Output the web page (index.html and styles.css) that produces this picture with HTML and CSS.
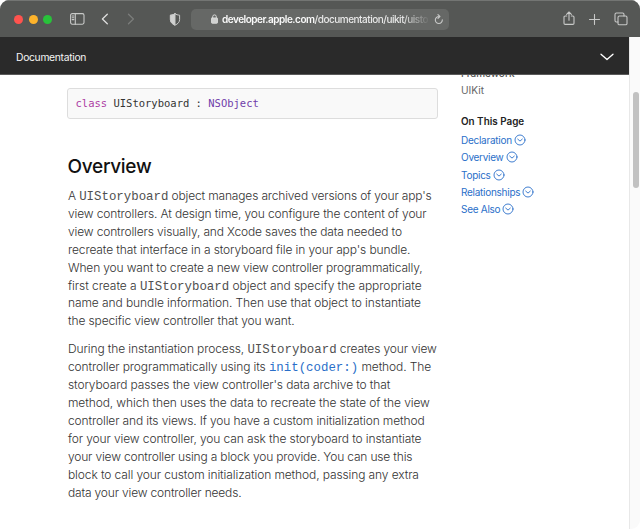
FILE: index.html
```html
<!DOCTYPE html>
<html lang="en">
<head>
<meta charset="utf-8">
<title>UIStoryboard</title>
<link rel="stylesheet" href="styles.css">
</head>
<body>
<div class="window">
  <header class="toolbar">
    <div class="lights"><i class="red"></i><i class="amber"></i><i class="green"></i></div>
    <svg class="sidebar-icon" width="15" height="12" viewBox="0 0 15 12"><rect x=".6" y=".6" width="13.4" height="10.6" rx="1.6"/><path d="M5.3.6v10.6M2.2 3h1.6M2.2 4.8h1.6M2.2 6.6h1.6"/></svg>
    <svg class="back" width="8" height="12" viewBox="0 0 8 12"><path d="M6.3 1.2 1.4 6l4.9 4.8"/></svg>
    <svg class="forward" width="8" height="12" viewBox="0 0 8 12"><path d="M1.5 1.2 6.4 6l-4.9 4.8"/></svg>
    <svg class="shield" width="12" height="13" viewBox="0 0 12 13"><path d="M6 .7c1.3 1 2.8 1.3 4.6 1.5v4.3c0 2.600-1.600 4.300-4.600 5.700C3 10.800 1.400 9.100 1.400 6.500V2.200C3.200 2 4.700 1.700 6 .7Z"/><path class="solid" d="M6 .7v11.500C3 10.800 1.400 9.100 1.400 6.500V2.200C3.200 2 4.700 1.700 6 .7Z"/></svg>
    <div class="address">
      <svg class="lock" width="7" height="10" viewBox="0 0 7 10"><rect class="solid" x=".4" y="4" width="6.200" height="5.200" rx=".8"/><path d="M1.700 4.400V2.700a1.800 1.800 0 0 1 3.600 0v1.700"/></svg>
      <span class="url"><b>developer.apple.com</b>/documentation/uikit/uisto</span>
      <svg class="reload" width="10" height="11" viewBox="0 0 10 11"><path d="M8.300 5.800A3.500 3.500 0 1 1 4.800 2.500h.8M4 .7l1.900 1.800L4 4.300"/></svg>
    </div>
    <svg class="share" width="12" height="15" viewBox="0 0 12 15"><path d="M3.700 5H2.200Q1 5 1 6.200v6Q1 13.400 2.200 13.400h7.600q1.200 0 1.200-1.200v-6Q11 5 9.800 5H8.300M6 9.200V1.200M3.600 3.400 6 1l2.400 2.400"/></svg>
    <svg class="plus" width="11" height="11" viewBox="0 0 11 11"><path d="M5.500.5v10M.5 5.500h10"/></svg>
    <svg class="tabs" width="14" height="14" viewBox="0 0 14 14"><rect x="4" y="4" width="9" height="8.800" rx="1.400"/><path d="M4 10H2.400Q1 10 1 8.600V2.400Q1 1 2.400 1h6.200Q10 1 10 2.400V4"/></svg>
  </header>
  <div class="viewport">
    <div class="page">
      <nav class="docbar"><span>Documentation</span><svg width="14" height="8" viewBox="0 0 14 8"><path d="M1 1.200 7 6.500l6-5.300"/></svg></nav>
      <div class="columns">
        <main>
          <pre class="declaration"><b class="kw">class</b> UIStoryboard : <b class="type">NSObject</b></pre>
          <h1>Overview</h1>
          <p><span class="l l1">A <code>UIStoryboard</code> object manages archived versions of your app's</span>
          <span class="l l2">view controllers. At design time, you configure the content of your</span>
          <span class="l l3">view controllers visually, and Xcode saves the data needed to</span>
          <span class="l l4">recreate that interface in a storyboard file in your app's bundle.</span>
          <span class="l l5">When you want to create a new view controller programmatically,</span>
          <span class="l l6">first create a <code>UIStoryboard</code> object and specify the appropriate</span>
          <span class="l l7">name and bundle information. Then use that object to instantiate</span>
          <span class="l l8">the specific view controller that you want.</span></p>
          <p><span class="l m1">During the instantiation process, <code>UIStoryboard</code> creates your view</span>
          <span class="l m2">controller programmatically using its <code class="link">init(coder:)</code> method. The</span>
          <span class="l m3">storyboard passes the view controller's data archive to that</span>
          <span class="l m4">method, which then uses the data to recreate the state of the view</span>
          <span class="l m5">controller and its views. If you have a custom initialization method</span>
          <span class="l m6">for your view controller, you can ask the storyboard to instantiate</span>
          <span class="l m7">your view controller using a block you provide. You can use this</span>
          <span class="l m8">block to call your custom initialization method, passing any extra</span>
          <span class="l m9">data your view controller needs.</span></p>
        </main>
        <aside>
          <div class="clip"><strong>Framework</strong></div>
          <div class="framework">UIKit</div>
          <h2>On This Page</h2>
          <ul>
            <li>Declaration<svg viewBox="0 0 12 12"><circle cx="6" cy="6" r="5"/><path d="m3.700 5.100 2.300 2 2.300-2"/></svg></li>
            <li>Overview<svg viewBox="0 0 12 12"><circle cx="6" cy="6" r="5"/><path d="m3.700 5.100 2.300 2 2.300-2"/></svg></li>
            <li>Topics<svg viewBox="0 0 12 12"><circle cx="6" cy="6" r="5"/><path d="m3.700 5.100 2.300 2 2.300-2"/></svg></li>
            <li>Relationships<svg viewBox="0 0 12 12"><circle cx="6" cy="6" r="5"/><path d="m3.700 5.100 2.300 2 2.300-2"/></svg></li>
            <li>See Also<svg viewBox="0 0 12 12"><circle cx="6" cy="6" r="5"/><path d="m3.700 5.100 2.300 2 2.300-2"/></svg></li>
          </ul>
        </aside>
      </div>
    </div>
    <div class="scrollbar"><div class="thumb"></div></div>
  </div>
</div>
</body>
</html>
```
FILE: styles.css
```css
* { box-sizing: border-box; }
body { margin: 0; background: #fff; font-family: Inter, "Liberation Sans", sans-serif; }
svg { display: block; flex: none; fill: none; stroke: #c8c9c8; stroke-width: 1.1; stroke-linecap: round; stroke-linejoin: round; }
.solid { fill: #d0d1d0; }
.window { width: 640px; height: 529px; border-radius: 9px; overflow: hidden; display: flex; flex-direction: column; }
.toolbar { height: 37px; flex: none; display: flex; align-items: center; padding-left: 14px; background: #555755; border-top: 1px solid #737573; }
.lights { display: flex; gap: 5.500px; }
.lights i { width: 9px; height: 9px; border-radius: 50%; }
.red { background: #ff534e; }
.amber { background: #fdb32b; }
.green { background: #28c23a; }
.sidebar-icon { margin-left: 17.500px; }
.back { margin-left: 16.500px; stroke: #dededd; stroke-width: 1.300; }
.forward { margin-left: 17.500px; stroke: #7b7d7b; stroke-width: 1.300; }
.shield { margin-left: 34.500px; stroke-width: 1; }
.address { margin-left: 10px; width: 258px; height: 21px; border-radius: 5px; background: #666866; display: flex; align-items: center; padding: 0 4px 0 20px; }
.lock { stroke: #d8d9d8; stroke-width: 1; }
.url { margin-left: 4px; width: 206px; overflow: hidden; white-space: nowrap; color: #e8e8e8; font-size: 10px; font-weight: 500; letter-spacing: -.490px; line-height: 20px; -webkit-mask-image: linear-gradient(to right, #000 87%, transparent 101%); mask-image: linear-gradient(to right, #000 87%, transparent 101%); }
.url b { font-weight: 600; color: #fafafa; }
.reload { margin-left: 6px; }
.share { margin-left: 113.500px; margin-top: -2px; }
.plus { margin-left: 14px; }
.tabs { margin-left: 14px; }
.viewport { flex: 1; min-height: 0; display: flex; }
.page { width: 629px; background: #fff; }
.docbar { height: 38px; background: #2a2a2a; border-bottom: 1px solid #5a5a5a; color: #f5f5f5; font-size: 10.300px; letter-spacing: -.3px; display: flex; align-items: center; justify-content: space-between; padding: 3px 15px 0 16px; }
.docbar svg { stroke: #fff; stroke-width: 1.300; }
.columns { display: flex; padding-left: 67px; }
main { width: 371px; flex: none; padding-top: 13px; }
.declaration { margin: 0 0 36px; height: 31px; padding: 0 7.500px; border: 1px solid #ddd; border-radius: 3px; background: #f9f9f9; color: #333; font: 10.500px/28px "DejaVu Sans Mono", monospace; }
.declaration b { font-weight: 400; }
.declaration .kw { color: #ad3da4; }
.declaration .type { color: #703daa; }
h1 { margin: 0 0 9px .5px; font-size: 19px; font-weight: 550; line-height: 23px; letter-spacing: -.3px; color: #111; }
p { margin: 0 0 10px 1px; color: #333; font-size: 12px; font-weight: 360; line-height: 17.900px; }
.l { display: block; width: max-content; white-space: nowrap; }
.l1 { letter-spacing: -.163px; }
.l2 { letter-spacing: -.136px; }
.l3 { letter-spacing: -.148px; }
.l4 { letter-spacing: -.12px; }
.l5 { letter-spacing: -.152px; }
.l6 { letter-spacing: -.05px; }
.l7 { letter-spacing: -.086px; }
.l8 { letter-spacing: -.125px; }
.m1, .m2, .m3, .m6, .m8 { letter-spacing: -.11px; }
.m4 { letter-spacing: -.1px; }
.m5 { letter-spacing: -.123px; }
.m7, .m9 { letter-spacing: -.17px; }
code { font: 12.400px/1 "Liberation Mono", monospace; letter-spacing: 0; color: #505050; }
.link, li { color: #2a6fc9; }
aside { margin-left: 23px; font-size: 10px; }
.clip { height: 2px; overflow: hidden; }
.clip strong { display: block; margin-top: -8px; line-height: 12px; font-weight: 500; color: #555; }
.framework { margin-top: 5px; line-height: 16px; font-size: 10.200px; color: #666; }
h2 { margin: 15px 0 2.500px; font-size: 9.900px; font-weight: 600; line-height: 16px; color: #222; }
ul { list-style: none; margin: 0; padding: 0; }
li { display: flex; align-items: center; height: 17.300px; font-size: 10px; letter-spacing: -.270px; }
li svg { width: 12px; height: 12px; margin-left: 2px; stroke: #2a6fc9; stroke-width: .9; }
.scrollbar { width: 11px; padding: 55px 1px 0 3px; background: #fafafa; border-left: 1px solid #e8e8e8; }
.thumb { width: 6px; height: 96px; border-radius: 3px; background: #c1c1c1; }
```
